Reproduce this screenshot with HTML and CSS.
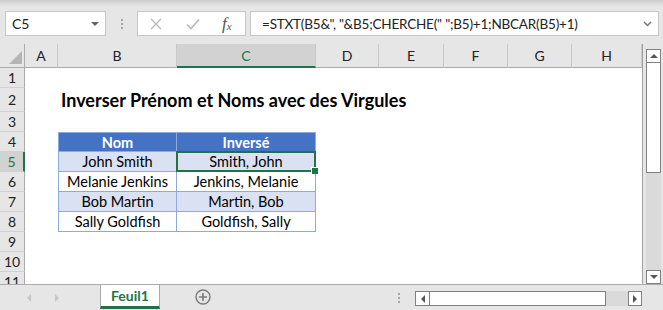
FILE: index.html
```html
<!DOCTYPE html>
<html lang="fr">
<head>
	<meta charset="UTF-8">
	<title>Inverser Prénom et Noms avec des Virgules</title>
	<link rel="stylesheet" href="styles.css">
</head>
<body>
<div class="app">
	<div class="toolbar">
		<div class="namebox"><span>C5</span><i class="caret"></i></div>
		<div class="dots"><i></i><i></i><i></i></div>
		<div class="fbtns">
			<svg class="ico-x" width="12" height="12" viewBox="0 0 12 12"><path d="M1 1L11 11M11 1L1 11" stroke="#b8b8b8" stroke-width="1.3" fill="none"/></svg>
			<svg class="ico-ok" width="14" height="12" viewBox="0 0 14 12"><path d="M1 6.5L5 10.5L13 1.5" stroke="#b8b8b8" stroke-width="1.6" fill="none"/></svg>
			<span class="fx">f<sub>x</sub></span>
		</div>
		<div class="formula">
			<span>=STXT(B5&amp;", "&amp;B5;CHERCHE(" ";B5)+1;NBCAR(B5)+1)</span>
			<svg width="9" height="6" viewBox="0 0 9 6"><path d="M1 1L4.5 4.5L8 1" stroke="#777" stroke-width="1.5" fill="none"/></svg>
		</div>
	</div>

	<div class="main">
		<div class="sheet">
			<div class="r hd">
				<div class="corner"><i></i></div>
				<div>A</div><div>B</div><div class="sel">C</div><div>D</div><div>E</div><div>F</div><div>G</div><div>H</div>
			</div>
			<div class="r"><div class="rh">1</div></div>
			<div class="r tall"><div class="rh">2</div><div></div><div class="title">Inverser Prénom et Noms avec des Virgules</div></div>
			<div class="r"><div class="rh">3</div></div>
			<div class="r"><div class="rh">4</div><div></div><div class="t th first">Nom</div><div class="t th">Inversé</div></div>
			<div class="r"><div class="rh sel">5</div><div></div><div class="t band first">John Smith</div><div class="t band cur">Smith, John</div></div>
			<div class="r"><div class="rh">6</div><div></div><div class="t first">Melanie Jenkins</div><div class="t">Jenkins, Melanie</div></div>
			<div class="r"><div class="rh">7</div><div></div><div class="t band first">Bob Martin</div><div class="t band">Martin, Bob</div></div>
			<div class="r"><div class="rh">8</div><div></div><div class="t first">Sally Goldfish</div><div class="t">Goldfish, Sally</div></div>
			<div class="r"><div class="rh">9</div></div>
			<div class="r"><div class="rh">10</div></div>
			<div class="r"><div class="rh">11</div></div>
		</div>
		<div class="vs">
			<div class="btn"><i class="tri up"></i></div>
			<div class="vthumb"></div>
			<div class="vtrack"></div>
			<div class="btn"><i class="tri down"></i></div>
		</div>
	</div>

	<div class="tabs">
		<div class="nav"><i class="tri left light"></i><i class="tri right light"></i></div>
		<div class="tab">Feuil1</div>
		<svg class="plus" width="16" height="16" viewBox="0 0 16 16"><circle cx="8" cy="8" r="7" stroke="#7a7a7a" stroke-width="1.4" fill="none"/><path d="M8 4V12M4 8H12" stroke="#7a7a7a" stroke-width="1.6"/></svg>
		<div class="hgroup">
			<div class="dots small"><i></i><i></i><i></i></div>
			<div class="hs">
				<div class="btn"><i class="tri left"></i></div>
				<div class="hthumb"></div>
				<div class="htrack"></div>
				<div class="btn narrow"><i class="tri right"></i></div>
			</div>
		</div>
	</div>
</div>
</body>
</html>
```

FILE: styles.css
```css
*{margin:0; padding:0; box-sizing:border-box;}
body{width:663px; height:310px; overflow:hidden; background:#e6e6e6; font-family:Lato, "Liberation Sans", sans-serif; color:#000;}
.app{display:flex; flex-direction:column; height:310px;}

/* formula bar */
.toolbar{height:44px; display:flex; align-items:flex-start; padding:11px 4px 0 5px; background:linear-gradient(#cdcdcd, #e6e6e6 7px);}
.namebox{width:101px; height:25px; background:#fff; border:1px solid #c6c6c6; display:flex; align-items:center; justify-content:space-between; padding:0 6px; font-size:14px; color:#222;}
.caret{width:0; height:0; border-left:4px solid transparent; border-right:4px solid transparent; border-top:4px solid #666;}
.dots{width:31px; height:25px; display:flex; flex-direction:column; align-items:center; justify-content:center; gap:2px;}
.dots i{width:2px; height:2px; background:#a6a6a6;}
.fbtns{width:109px; height:25px; background:#fff; border:1px solid #c6c6c6; display:flex; align-items:center; padding-left:12px; margin-right:4px;}
.ico-ok{margin-left:24px;}
.fx{margin-left:22px; font-family:"Liberation Serif", serif; font-style:italic; font-size:17px; color:#555; line-height:1;}
.fx sub{font-size:11px; vertical-align:-1px;}
.formula{flex:1; height:25px; background:#fff; border:1px solid #c6c6c6; display:flex; align-items:center; justify-content:space-between; padding:0 6px 0 11px; font-size:13.5px; letter-spacing:-0.2px; color:#222;}

/* sheet */
.main{display:flex; height:240px;}
.sheet{width:643px; background:#fff; border-right:1px solid #a0a0a0; overflow:hidden;}
.r{display:grid; grid-template-columns:25px 33px 119px 139px 63px 65px 64px 64px 70px; height:20px;}
.r.tall{height:24px;}
.hd{height:24px; background:#e6e6e6;}
.hd div{display:flex; align-items:center; justify-content:center; border-right:1px solid #c8c8c8; border-bottom:1px solid #ababab; font-size:14px; color:#222;}
.hd .corner{justify-content:flex-end; align-items:flex-end; padding:0 2px 3px 0; border-right:1px solid #ababab;}
.corner i{width:0; height:0; border-left:13px solid transparent; border-bottom:13px solid #b5b5b5;}
.hd .sel{background:#d2d2d2; color:#217346; border-bottom:2px solid #217346;}
.rh{background:#e6e6e6; border-right:1px solid #ababab; border-bottom:1px solid #d0d0d0; display:flex; align-items:center; justify-content:center; font-size:14px; color:#222;}
.rh.sel{background:#d2d2d2; color:#217346; border-right:2px solid #217346;}
.title{grid-column:3 / 9; display:flex; align-items:center; padding-left:3px; font-size:18px; font-weight:bold; white-space:nowrap;}
.t{display:flex; align-items:center; justify-content:center; font-size:14.5px; border-right:1px solid #8ea9db; border-bottom:1px solid #8ea9db;}
.t.first{border-left:1px solid #8ea9db;}
.th{background:#4472c4; color:#fff; font-weight:bold; border-top:1px solid #8ea9db;}
.band{background:#d9e1f2;}
.cur{position:relative;}
.cur::before{content:""; position:absolute; left:-1px; top:-1px; right:-1px; bottom:-1px; border:2px solid #217346;}
.cur::after{content:""; position:absolute; right:-3px; bottom:-3px; width:6px; height:6px; background:#217346; border-left:1px solid #fff; border-top:1px solid #fff;}

/* scroll bars */
.btn{width:15px; height:14px; background:#fff; border:1px solid #808080; display:flex; align-items:center; justify-content:center;}
.btn.narrow{width:14px;}
.tri{width:0; height:0;}
.tri.up{border-left:4px solid transparent; border-right:4px solid transparent; border-bottom:4px solid #555;}
.tri.down{border-left:4px solid transparent; border-right:4px solid transparent; border-top:4px solid #555;}
.tri.left{border-top:4px solid transparent; border-bottom:4px solid transparent; border-right:4px solid #555;}
.tri.right{border-top:4px solid transparent; border-bottom:4px solid transparent; border-left:4px solid #555;}
.tri.light.left{border-right-color:#c6c6c6;}
.tri.light.right{border-left-color:#c6c6c6;}
.vs{flex:1; display:flex; flex-direction:column; padding:5px 0 0 3px;}
.vthumb{width:15px; height:110px; background:#fff; border:1px solid #808080; border-top:none;}
.vtrack{width:15px; flex:1; background:#dadada;}

/* sheet tabs */
.tabs{height:26px; border-top:1px solid #ababab; display:flex; align-items:flex-start;}
.nav{width:100px; height:25px; display:flex; align-items:center; gap:24px; padding-left:27px;}
.tab{width:60px; height:24px; background:#fff; border-left:1px solid #ababab; border-right:1px solid #ababab; border-bottom:3px solid #217346; display:flex; align-items:center; justify-content:center; font-size:14px; font-weight:bold; color:#217346;}
.plus{margin:4px 0 0 35px;}
.hgroup{margin-left:auto; margin-right:21px; display:flex; align-items:flex-start;}
.dots.small{width:16px; height:18px; margin:4px 8px 0 0;}
.hs{width:227px; height:15px; margin-top:6px; display:flex;}
.hs .btn{height:15px;}
.hthumb{width:176px; height:15px; background:#fff; border:1px solid #808080; border-left:none;}
.htrack{flex:1; background:#dadada;}
```
